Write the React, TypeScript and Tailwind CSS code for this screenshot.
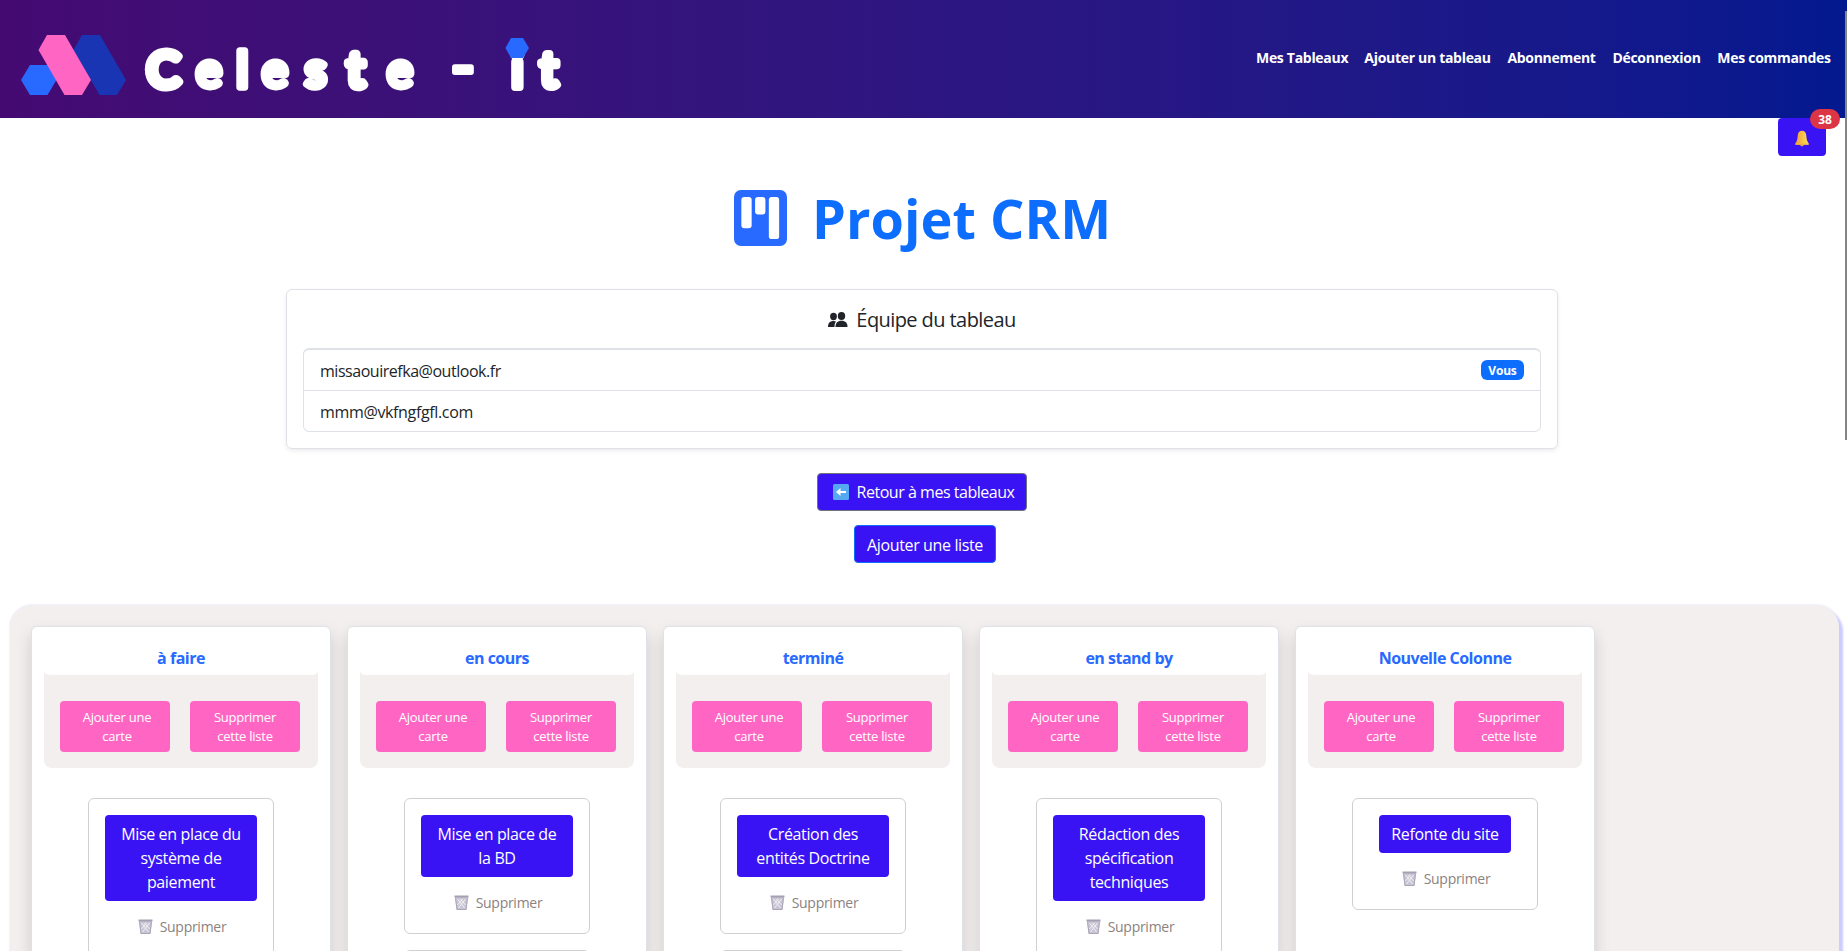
const F = "font-['Open_Sans',sans-serif]";

const NAV = [
  { t: 'Mes Tableaux', w: 'w-[92px]' },
  { t: 'Ajouter un tableau', w: 'w-[127px]' },
  { t: 'Abonnement', w: 'w-[89px]' },
  { t: 'Déconnexion', w: 'w-[89px]' },
  { t: 'Mes commandes', w: 'w-[114px]' },
];

const COLUMNS = [
  { title: 'à faire', lines: ['Mise en place du', 'système de', 'paiement'], more: false },
  { title: 'en cours', lines: ['Mise en place de', 'la BD'], more: true },
  { title: 'terminé', lines: ['Création des', 'entités Doctrine'], more: true },
  { title: 'en stand by', lines: ['Rédaction des', 'spécification', 'techniques'], more: false },
  { title: 'Nouvelle Colonne', lines: ['Refonte du site'], more: false },
];

function Logo() {
  return (
    <svg width="600" height="117" viewBox="0 0 600 117" className="block shrink-0">
      <polygon points="30,65 48,65 56.500,80 47.500,95 30,95 21,80" fill="#2869ff" />
      <polygon points="82,35 100,35 126,80 117,95 99.500,95 73.500,50" fill="#1a35b3" />
      <polygon points="47,35 65,35 91,80 82,95 64.500,95 38.500,50" fill="#ff66c4" />
      <text
        fill="#fff"
        stroke="#fff"
        strokeWidth="6.800"
        strokeLinejoin="round"
        fontFamily="Lato, sans-serif"
        fontWeight="400"
        fontSize="49"
        y="86.500"
        x="147 196 236.500 262 305 347 387 424"
      >
        <tspan strokeWidth="9">C</tspan>e<tspan strokeWidth="7.500">l</tspan>e<tspan strokeWidth="7.500">s</tspan>
        <tspan strokeWidth="8.500">t</tspan>{'e '}
        <tspan x="451" y="88.500" fontSize="64" strokeWidth="6">-</tspan>
        <tspan y="86.500" x="490 511.500 540" strokeWidth="8">{' it'}</tspan>
      </text>
      <polygon points="511,38 523,38 529,48 523,58 511,58 505.500,48" fill="#2869ff" />
    </svg>
  );
}

function Bell() {
  return (
    <svg width="14" height="17" viewBox="0 0 16 18" className="mt-[3px]">
      <defs>
        <linearGradient id="bell">
          <stop offset="0" stopColor="#ee9c3b" />
          <stop offset="1" stopColor="#ffe05c" />
        </linearGradient>
      </defs>
      <path d="M8 0c-3 0-4.600 2-4.900 5.500C2.800 9.500 2.500 11.500.5 14.500V16h15v-1.500c-2-3-2.300-5-2.600-9C12.600 2 11 0 8 0Z" fill="url(#bell)" />
      <path d="M.5 14.700h15V16H.5Z" fill="#f7b53c" />
      <path d="M6 16h4c0 2.400-4 2.400-4 0Z" fill="#f2a93b" />
    </svg>
  );
}

function Trash() {
  return (
    <svg width="15" height="15" viewBox="0 0 15 15" className="shrink-0">
      <path d="M1 2h13l-1.500 13h-10Z" fill="#c9c5d3" />
      <path d="M3.500 4l7 9M6.500 4l5 6M11.500 4l-7 9M8.500 4l-5 6" stroke="#f1eff6" strokeWidth="1" />
      <path d="M1.500 3l1.500 11.500h9L13.500 3" fill="none" stroke="#aaa5b8" />
      <path d="M.5.500h14v2H.5Z" fill="#a5a0b3" />
    </svg>
  );
}

function Column({ title, lines, more }: { title: string; lines: string[]; more: boolean }) {
  return (
    <section className="h-[420px] w-[300px] shrink-0 rounded-md border border-[#dee2e6] bg-white px-3 shadow-[0_8px_16px_rgba(0,0,0,0.15)]">
      <div className="mt-3 rounded-b-[8px] bg-[#f3efee]">
        <h2 className="h-9 rounded-b-[5px] bg-white pt-[7px] text-center text-base leading-6 font-bold tracking-[-0.500px] text-[#2869ff]">{title}</h2>
        <div className="flex gap-5 px-4 pt-[26px] pb-4 text-center text-[13px] leading-[19px] tracking-[-0.250px] text-white">
          <button className="h-[51px] w-[110px] rounded bg-[#ff66c4] pt-px pl-1">Ajouter une<br />carte</button>
          <button className="h-[51px] w-[110px] rounded bg-[#ff66c4] pt-px">Supprimer<br />cette liste</button>
        </div>
      </div>
      <div className="mt-[30px] flex flex-col items-center gap-4">
        <article className="flex w-[186px] flex-col items-center rounded-md border border-[#d0d0d0] px-4 pt-4 pb-[19px]">
          <button className={`${lines.length > 1 ? 'w-[152px]' : 'w-[132px]'} rounded bg-[#3913f3] py-[7px] text-center text-base leading-6 tracking-[-0.350px] text-white`}>
            {lines.map((l) => <span key={l} className="block whitespace-nowrap">{l}</span>)}
          </button>
          <div className="mt-[15px] mb-px ml-[2px] flex h-[21px] items-center gap-[7px] text-sm tracking-[-0.280px] text-[#8b8280]"><Trash />Supprimer</div>
        </article>
        {more && <article className="h-[80px] w-[186px] rounded-md border border-[#d0d0d0]" />}
      </div>
    </section>
  );
}

export default function App() {
  return (
    <div className={`${F} relative h-[951px] w-full overflow-hidden bg-white text-[#212529]`}>
      <header className="flex h-[118px] justify-between bg-linear-to-r from-[#440a72] to-[#03198f]">
        <Logo />
        <nav className="flex gap-4 pt-[47px] pr-4 text-[14px] leading-[22px] font-bold text-white">
          {NAV.map(({ t, w }) => (
            <a key={t} className={`${w} text-center tracking-[-0.300px] whitespace-nowrap`}>{t}</a>
          ))}
        </nav>
      </header>

      <div className="flex h-[38px] justify-end pr-[21px]">
        <button className="relative flex h-[38px] w-12 items-center justify-center rounded bg-[#3913f3]">
          <Bell />
          <span className="absolute -top-[9px] -right-[14px] flex h-5 w-[30px] items-center justify-center rounded-full bg-[#dc3545] pt-px text-xs font-bold text-white">38</span>
        </button>
      </div>

      <main className="flex flex-col items-center pr-[3px]">
        <div className="mt-[32px] flex h-[60px] items-center">
          <svg width="53" height="56" viewBox="0 0 54 57">
            <rect width="54" height="57" rx="7" fill="#2869ff" />
            <rect x="7.500" y="7" width="10.500" height="32" rx="3" fill="#fff" />
            <rect x="21.500" y="7" width="10.500" height="18" rx="3" fill="#fff" />
            <rect x="35.500" y="7" width="10.500" height="43" rx="3" fill="#fff" />
          </svg>
          <h1 className="ml-[25px] w-[298px] text-[54px] leading-[60px] font-bold tracking-[0.050px] whitespace-nowrap text-[#0d6efd]">Projet CRM</h1>
        </div>

        <section className="mt-[41px] h-[160px] w-[1272px] rounded-md border border-[#dee2e6] px-4 pt-4 shadow-[0_2px_4px_rgba(0,0,0,0.075)]">
          <h2 className="flex h-7 items-center justify-center gap-2 text-xl tracking-[-0.580px]">
            <svg width="20" height="16" viewBox="0 0 20 16" fill="#212529">
              <ellipse cx="5.500" cy="4.500" rx="3.400" ry="3.700" />
              <ellipse cx="13.500" cy="4" rx="3.700" ry="4" />
              <path d="M0 15c0-4 2-6 5.500-6 1 0 1.800.2 2.500.6C6.800 11 6.500 13 6.500 15Z" />
              <path d="M7.500 15c0-4 2-6.200 6-6.200s6 2.200 6 6.200Z" />
            </svg>
            Équipe du tableau
          </h2>
          <ul className="mt-[14px] rounded-md border border-t-2 border-[#dee2e6] text-base tracking-[-0.470px]">
            <li className="flex h-[41px] items-center justify-between border-b border-[#dee2e6] px-4">
              <span className="pt-px">missaouirefka@outlook.fr</span>
              <span className="flex h-5 w-[43px] items-center justify-center rounded-md bg-[#0d6efd] pt-px text-xs font-bold tracking-[-0.200px] text-white">Vous</span>
            </li>
            <li className="flex h-10 items-center px-4 pt-px tracking-[-0.350px]">mmm@vkfngfgfl.com</li>
          </ul>
        </section>

        <button className="mt-6 flex h-[38px] w-[210px] items-center justify-center gap-2 rounded border border-[#6c757d] bg-[#3913f3] pl-[3px] text-base tracking-[-0.470px] whitespace-nowrap text-white">
          <svg width="16" height="16" viewBox="0 0 16 16">
            <rect width="16" height="16" rx="1.500" fill="#55a9f2" />
            <path d="M7.500 4 3 8l4.500 4V9H13V7H7.500Z" fill="#fff" />
          </svg>
          Retour à mes tableaux
        </button>
        <button className="mt-[14px] ml-[6px] h-[38px] w-[142px] rounded border border-[#0d6efd] bg-[#3913f3] pt-px text-base tracking-[-0.370px] whitespace-nowrap text-white">Ajouter une liste</button>
      </main>

      <div className="mt-[42px] mr-[8px] ml-[10px] flex h-[440px] gap-4 rounded-[22px] bg-[#f3efee] pt-[21px] pl-[21px] shadow-[4px_4px_2px_#ccccff,0_0_1px_1px_#f0f0ff]">
        {COLUMNS.map((c) => <Column key={c.title} {...c} />)}
      </div>

      <div className="absolute top-[11px] right-0 h-[429px] w-[2px] bg-[#858585]" />
    </div>
  );
}
